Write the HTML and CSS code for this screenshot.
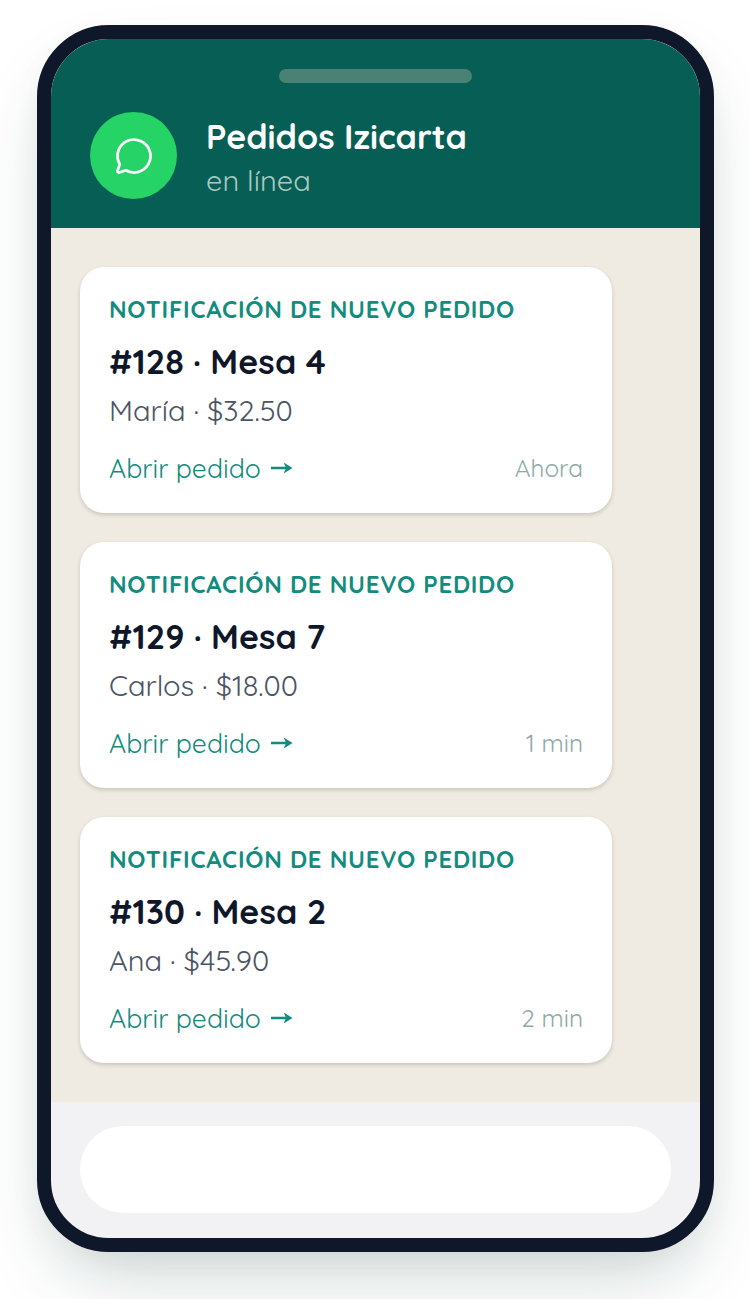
FILE: index.html
```html
<!DOCTYPE html>
<html lang="es">
<head>
<meta charset="utf-8">
<title>Pedidos Izicarta</title>
<link rel="stylesheet" href="styles.css">
</head>
<body>
<main class="phone">
  <header class="header">
    <div class="notch"></div>
    <div class="contact">
      <div class="avatar">
        <svg class="avatar-icon" viewBox="0 0 256 256" fill="#fff"><path d="M128,24A104,104,0,0,0,36.18,176.88L24.83,210.93a16,16,0,0,0,20.24,20.24l34.05-11.35A104,104,0,1,0,128,24Zm0,192a87.87,87.87,0,0,1-44.06-11.81,8,8,0,0,0-6.54-.67L40,216,52.47,178.6a8,8,0,0,0-.66-6.54A88,88,0,1,1,128,216Z"/></svg>
      </div>
      <div class="contact-text">
        <div class="contact-name">Pedidos Izicarta</div>
        <div class="contact-status">en línea</div>
      </div>
    </div>
  </header>
  <section class="chat">
    <article class="card">
      <div class="eyebrow">NOTIFICACIÓN DE NUEVO PEDIDO</div>
      <div class="order">#128 · Mesa 4</div>
      <div class="meta">María · $32.50</div>
      <div class="card-foot"><span class="open">Abrir pedido <svg class="arrow" viewBox="0 0 23 12" fill="currentColor"><path d="M1 4.7H15.6L13.6 .6 22.6 6 13.6 11.4 15.6 7.3H1Z"/></svg></span><span class="time">Ahora</span></div>
    </article>
    <article class="card">
      <div class="eyebrow">NOTIFICACIÓN DE NUEVO PEDIDO</div>
      <div class="order">#129 · Mesa 7</div>
      <div class="meta">Carlos · $18.00</div>
      <div class="card-foot"><span class="open">Abrir pedido <svg class="arrow" viewBox="0 0 23 12" fill="currentColor"><path d="M1 4.7H15.6L13.6 .6 22.6 6 13.6 11.4 15.6 7.3H1Z"/></svg></span><span class="time">1 min</span></div>
    </article>
    <article class="card">
      <div class="eyebrow">NOTIFICACIÓN DE NUEVO PEDIDO</div>
      <div class="order">#130 · Mesa 2</div>
      <div class="meta">Ana · $45.90</div>
      <div class="card-foot"><span class="open">Abrir pedido <svg class="arrow" viewBox="0 0 23 12" fill="currentColor"><path d="M1 4.7H15.6L13.6 .6 22.6 6 13.6 11.4 15.6 7.3H1Z"/></svg></span><span class="time">2 min</span></div>
    </article>
  </section>
  <footer class="composer"><div class="input"></div></footer>
</main>
</body>
</html>
```
FILE: styles.css
```css
* { box-sizing: border-box; }
html, body { margin: 0; height: 1299px; overflow: hidden; background: #fff; }
body {
  padding: 25px 36px 0 37px;
  font-family: Quicksand, Lato, "Noto Sans", sans-serif;
}
.phone {
  width: 677px;
  height: 1227px;
  border: 14px solid #0f172a;
  border-radius: 72px;
  background: #f2f2f4;
  overflow: hidden;
  display: flex;
  flex-direction: column;
  box-shadow: 0 36px 72px -18px rgba(15, 60, 50, .22), 0 8px 30px rgba(0, 0, 0, .03);
}
.header {
  height: 189px;
  background: #075e54;
  color: #fff;
  display: flex;
  flex-direction: column;
  align-items: center;
  padding-top: 30px;
  flex: none;
}
.notch { width: 193px; height: 14px; border-radius: 7px; background: #4b8174; }
.contact { align-self: stretch; display: flex; align-items: flex-start; gap: 29px; padding: 29px 0 0 39px; }
.avatar { width: 87px; height: 87px; border-radius: 50%; background: #25d366; display: flex; align-items: center; justify-content: center; }
.avatar-icon { width: 44px; height: 44px; }
.contact-name { font-size: 34px; font-weight: 700; line-height: 44px; padding-top: 3px; }
.contact-status { font-size: 29px; line-height: 44px; color: #a9c9c2; margin-top: -1px; }
.chat {
  height: 874px;
  background: #efeae2;
  padding: 39px 0 0 29px;
  display: flex;
  flex-direction: column;
  gap: 29px;
  flex: none;
}
.card {
  width: 532px;
  height: 246px;
  background: #fff;
  border-radius: 24px;
  padding: 27px 29px 0;
  box-shadow: 0 2px 4px rgba(0, 0, 0, .16);
}
.eyebrow { font-size: 24px; font-weight: 700; line-height: 30px; color: #128c7e; letter-spacing: .72px; white-space: nowrap; }
.order { font-size: 34px; font-weight: 700; line-height: 44px; margin-top: 16px; color: #0f172a; }
.meta { font-size: 29px; line-height: 36px; margin-top: 8px; color: #4b5563; }
.card-foot { display: flex; justify-content: space-between; align-items: center; margin-top: 22px; height: 36px; }
.open { font-size: 26.6px; color: #128c7e; display: flex; align-items: center; gap: 9.5px; }
.arrow { width: 23px; height: 12px; margin-top: 0; }
.time { font-size: 24.4px; color: #8fa9a7; }
.composer { padding: 24px 29px 0; flex: none; }
.input { height: 87px; background: #fff; border-radius: 44px; }
```
